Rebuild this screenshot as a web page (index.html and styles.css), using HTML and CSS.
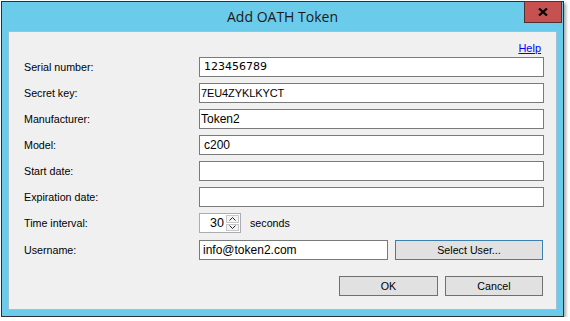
FILE: index.html
```html
<!DOCTYPE html>
<html lang="en">
<head>
    <meta charset="UTF-8">
    <title>Add OATH Token</title>
    <link rel="stylesheet" href="styles.css">
</head>
<body>

<div class="window">
    <div class="titlebar">
        <span></span>
        <span class="title">Add OATH Token</span>
        <div class="close-btn">
            <svg width="10" height="8" viewBox="0 0 10 8">
                <path d="M1 0.5 L9 7.5 M9 0.5 L1 7.5" stroke="#000" stroke-width="2.2" fill="none"/>
            </svg>
        </div>
    </div>

    <div class="content">
        <div class="help-row"><a href="#">Help</a></div>

        <div class="form">
            <div class="row">
                <label>Serial number:</label>
                <div class="textbox mono pad-wide">123456789</div>
            </div>
            <div class="row">
                <label>Secret key:</label>
                <div class="textbox pad-none narrow">7EU4ZYKLKYCT</div>
            </div>
            <div class="row">
                <label>Manufacturer:</label>
                <div class="textbox pad-none">Token2</div>
            </div>
            <div class="row">
                <label>Model:</label>
                <div class="textbox pad-wide">c200</div>
            </div>
            <div class="row">
                <label>Start date:</label>
                <div class="textbox"></div>
            </div>
            <div class="row">
                <label>Expiration date:</label>
                <div class="textbox"></div>
            </div>
            <div class="row">
                <label>Time interval:</label>
                <div class="inline">
                    <div class="spin">
                        <span class="spin-value">30</span>
                        <div class="spin-arrows">
                            <div class="spin-btn">
                                <svg width="7" height="4" viewBox="0 0 7 4"><path d="M0.5 3.5 L3.5 0.5 L6.5 3.5" stroke="#222" stroke-width="1" fill="none"/></svg>
                            </div>
                            <div class="spin-btn">
                                <svg width="7" height="4" viewBox="0 0 7 4"><path d="M0.5 0.5 L3.5 3.5 L6.5 0.5" stroke="#222" stroke-width="1" fill="none"/></svg>
                            </div>
                        </div>
                    </div>
                    <span class="unit">seconds</span>
                </div>
            </div>
            <div class="row">
                <label>Username:</label>
                <div class="inline">
                    <div class="textbox short">info@token2.com</div>
                    <button class="btn btn-default select-btn">Select User...</button>
                </div>
            </div>
        </div>

        <div class="actions">
            <button class="btn ok-btn">OK</button>
            <button class="btn cancel-btn">Cancel</button>
        </div>
    </div>
</div>

</body>
</html>
```

FILE: styles.css
```css
body {
    margin: 0;
    padding: 1px 0 0 1px;
    background-color: white;
    font-family: 'Liberation Sans', Arial, sans-serif;
    font-size: 10.7px;
    color: #000;
}
.window {
    width: 563px;
    height: 316px;
    box-sizing: border-box;
    border: 1px solid #2f2f2f;
    background-color: #6bcbea;
    padding: 0 7px 7px 7px;
    box-shadow: 2px 2px 3px rgba(0, 0, 0, 0.35);
    display: flex;
    flex-direction: column;
}
.titlebar {
    height: 30px;
    margin: 0 -7px;
    display: grid;
    grid-template-columns: 1fr auto 1fr;
}
.title {
    font-family: 'Open Sans', 'Noto Sans', sans-serif;
    font-size: 14px;
    line-height: 30px;
    color: #1a1a1a;
}
.close-btn {
    justify-self: end;
    align-self: start;
    margin: -1px 1px 0 0;
    width: 38px;
    height: 22px;
    box-sizing: border-box;
    background-color: #c75050;
    border: 1px solid #4e3030;
    display: flex;
    align-items: center;
    justify-content: center;
}
.content {
    flex: 1;
    background-color: #f0f0f0;
    box-shadow: 0 0 0 1px #9cc3d2;
    padding: 9px 12px 0 15px;
}
.help-row {
    height: 14px;
    line-height: 14px;
    margin-bottom: 2px;
    padding-right: 3px;
    text-align: right;
    font-size: 11px;
}
.help-row a {
    color: #0000ff;
    text-decoration: underline;
}
.form {
    display: flex;
    flex-direction: column;
    gap: 6px;
}
.row {
    display: grid;
    grid-template-columns: 175px 1fr;
    align-items: center;
    min-height: 20px;
}
.textbox {
    width: 345px;
    height: 20px;
    box-sizing: border-box;
    border: 1px solid #7a7a7a;
    background: white;
    font-size: 12px;
    line-height: 18px;
    padding-left: 2px;
    white-space: nowrap;
    overflow: hidden;
}
.textbox.mono {
    font-family: 'DejaVu Sans', sans-serif;
    font-size: 11px;
}
.textbox.narrow {
    font-size: 11px;
    letter-spacing: -0.1px;
}
.pad-wide {
    padding-left: 4px;
}
.pad-none {
    padding-left: 1px;
}
.textbox.short {
    width: 189px;
    padding-left: 3px;
}
.inline {
    display: flex;
    align-items: center;
}
.spin {
    width: 42px;
    height: 20px;
    box-sizing: border-box;
    border: 1px solid #abadb3;
    background: white;
    display: flex;
    align-items: stretch;
}
.spin-value {
    flex: 1;
    text-align: right;
    padding-right: 2px;
    font-size: 12.5px;
    line-height: 18px;
}
.spin-arrows {
    width: 13px;
    display: flex;
    flex-direction: column;
    gap: 1px;
    padding: 1px 1px 1px 0;
}
.spin-btn {
    flex: 1;
    border: 1px solid #c8c8c8;
    background-color: #f4f4f4;
    display: flex;
    align-items: center;
    justify-content: center;
}
.unit {
    margin-left: 9px;
}
.btn {
    height: 20px;
    box-sizing: border-box;
    background-color: #e1e1e1;
    border: 1px solid #707070;
    font-family: 'Liberation Sans', Arial, sans-serif;
    font-size: 10.7px;
    color: #000;
    padding: 0;
}
.btn-default {
    border-color: #3c7fb1;
}
.select-btn {
    width: 148px;
    margin: 1px 0 0 7px;
}
.actions {
    display: flex;
    justify-content: flex-end;
    gap: 7px;
    margin-top: 16px;
    padding-right: 1px;
}
.ok-btn {
    width: 99px;
}
.cancel-btn {
    width: 98px;
}
```
